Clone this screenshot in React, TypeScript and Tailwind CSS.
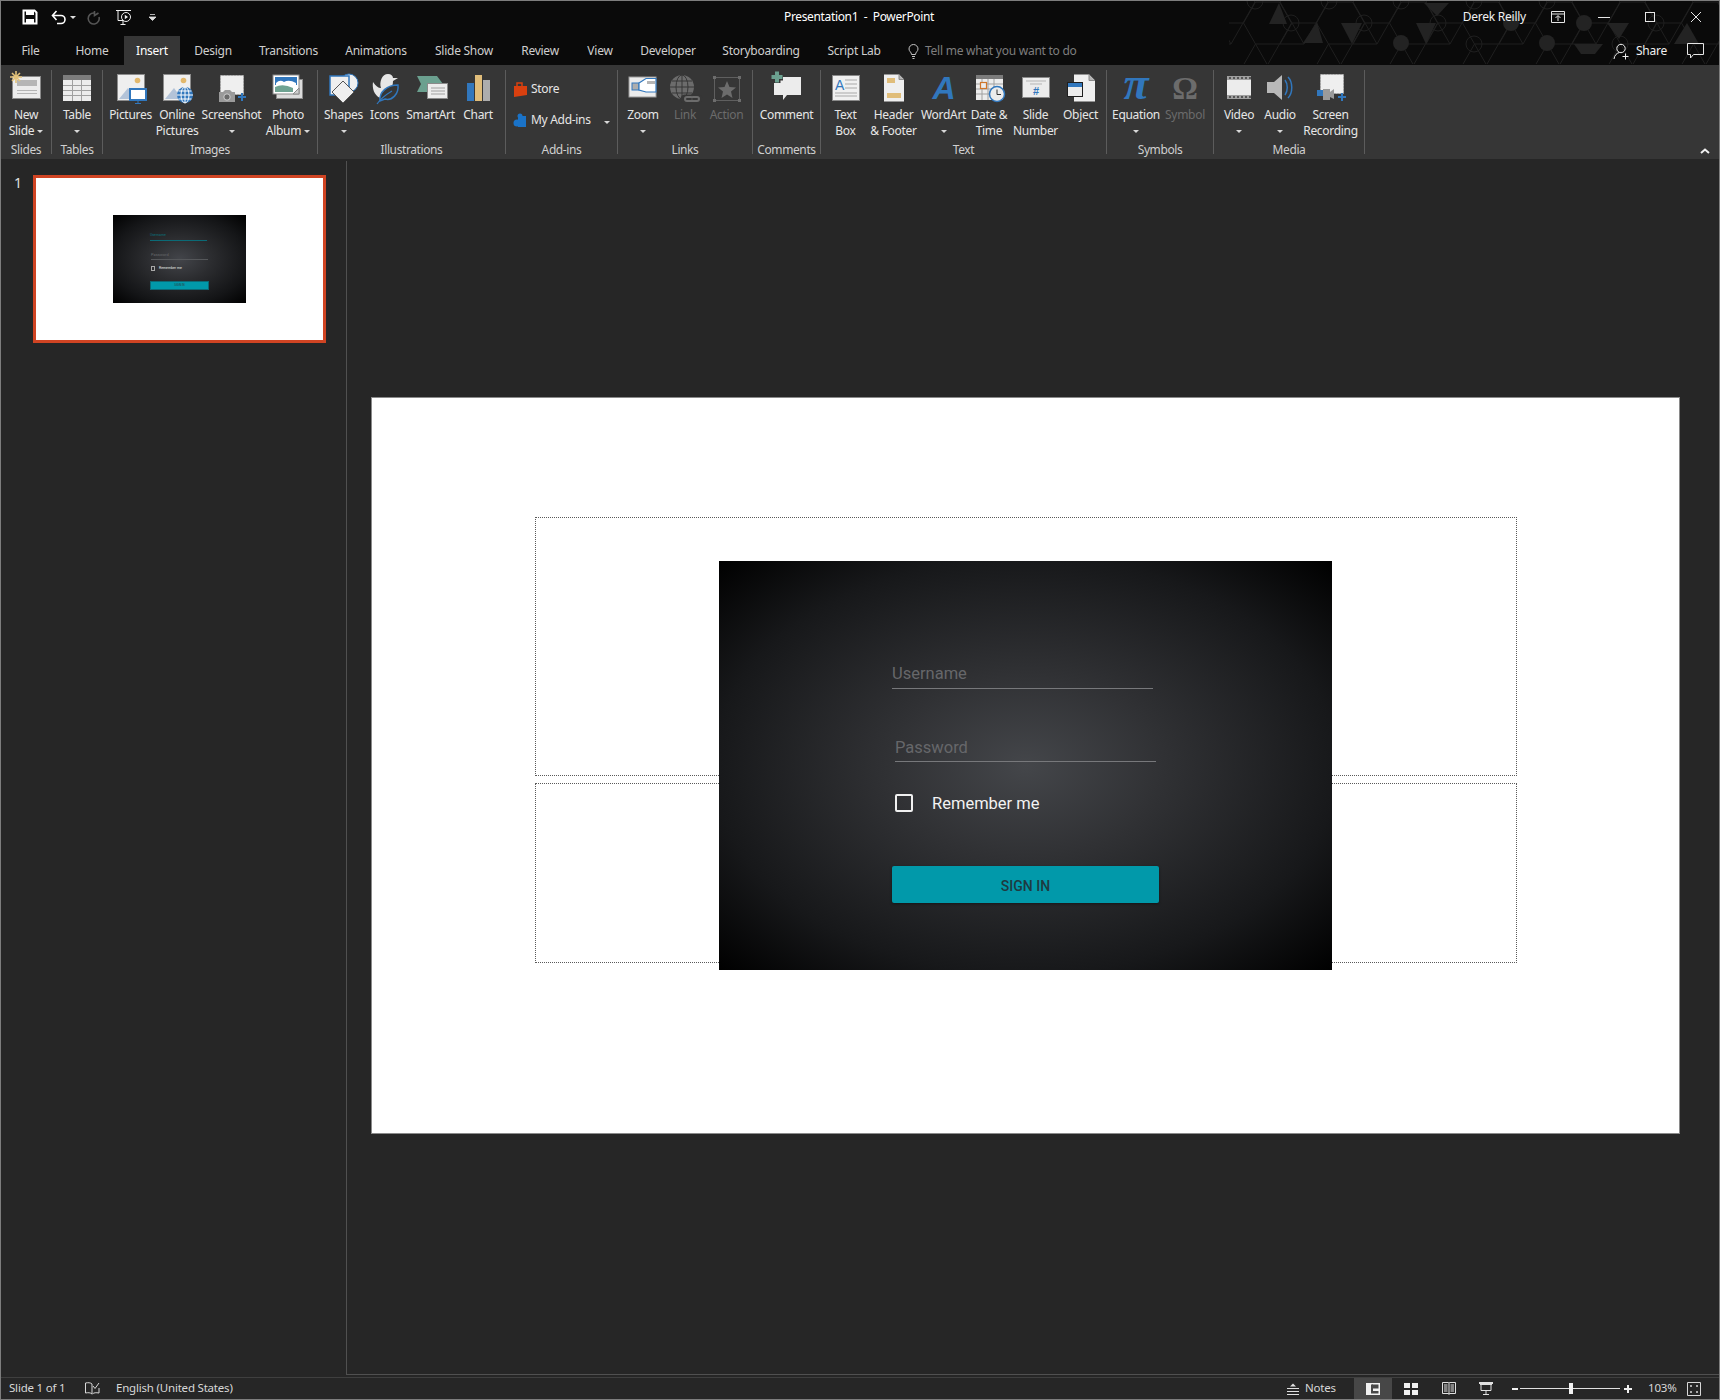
import React from 'react';

const FONT = "'Noto Sans', 'Open Sans', sans-serif";

const Svg = ({ children }: { children: React.ReactNode }) => (
  <svg width="44" height="36" viewBox="0 0 44 36" className="shrink-0 block overflow-visible">
    {children}
  </svg>
);

const Caret = () => (
  <span className="inline-block w-0 h-0 border-x-[3px] border-t-[3px] border-x-transparent border-t-[#d8d8d8]" />
);

interface ItemProps {
  w: string;
  lines: string[];
  caret?: 'inline' | 'line';
  off?: boolean;
  children: React.ReactNode;
}

const Item = ({ w, lines, caret, off, children }: ItemProps) => (
  <div className={`${w} shrink-0 flex flex-col items-center`}>
    <Svg>{children}</Svg>
    <div className={`mt-[3px] flex flex-col items-center whitespace-nowrap leading-[16px] ${off ? 'text-[#6b6b6b]' : 'text-[#e6e6e6]'}`}>
      {lines.map((l, i) => (
        <span key={l} className="flex items-center gap-[3px]">
          {l}
          {caret === 'inline' && i === lines.length - 1 && <Caret />}
        </span>
      ))}
      {caret === 'line' && (
        <span className="h-[16px] flex items-center">
          <Caret />
        </span>
      )}
    </div>
  </div>
);

const Group = ({ w, pad, label, children }: { w: string; pad?: string; label: string; children: React.ReactNode }) => (
  <>
    <div className={`${w} shrink-0 flex flex-col`}>
      <div className={`h-[77px] pt-[3px] flex ${pad ?? ''}`}>{children}</div>
      <div className="h-[16px] leading-[16px] text-center text-[#cfcfcf] whitespace-nowrap tracking-[-0.4px]">{label}</div>
    </div>
    <div className="w-px shrink-0 my-[5px] bg-[#5c5c5c]" />
  </>
);

const Pic = () => (
  <>
    <rect x="8.5" y="6.5" width="27" height="26" fill="#efefef" stroke="#8c8c8c" />
    <circle cx="28.5" cy="12.5" r="2.8" fill="#e2b86c" />
    <path d="M10 31 L19 20 L27 31 Z" fill="#b3c3d8" />
  </>
);

const HexPattern = () => {
  const cells: React.ReactNode[] = [];
  for (let c = 0; c < 15; c++) {
    const x = c * 36.5;
    const y = c % 2 === 0 ? 0 : 21;
    cells.push(
      <path key={c} d={`M${x - 12} ${y + 1} L${x} ${y - 20} L${x + 24} ${y - 20} L${x + 36} ${y + 1} L${x + 24} ${y + 22} L${x} ${y + 22} Z M${x} ${y + 22} L${x + 12} ${y + 43} M${x + 24} ${y + 22} L${x + 12} ${y + 43} L${x - 12} ${y + 43} L${x} ${y + 22}`} />
    );
  }
  return (
    <svg width="490" height="63" viewBox="10 0 490 63" className="absolute right-0 top-0">
      <g fill="none" stroke="#1f1f1f" strokeWidth="1">
        {cells}
        {[[72, 22], [145, 22], [219, 22], [255, 43], [255, 0], [328, 0], [36, 0], [401, 43], [437, 22], [182, 0], [110, 0]].map(([cx, cy]) => (
          <circle key={`${cx}-${cy}`} cx={cx} cy={cy} r="8" />
        ))}
      </g>
      <g fill="#232323">
        <path d="M60 2 L50 23 L68 23 Z" />
        <path d="M98 21 L84 42 L104 42 Z" />
        <path d="M122 22 L143 22 L133 43 Z" />
        <path d="M205 2 L230 2 L218 15 Z" />
        <path d="M197 22 L217 22 L207 43 Z" />
        <path d="M355 43 L384 43 L376 53 L362 53 Z" />
        <path d="M388 22 L410 22 L400 38 Z" />
        <path d="M455 43 L480 43 L468 22 Z" />
        <circle cx="182" cy="42" r="8" />
        <circle cx="328" cy="42" r="8" />
        <circle cx="365" cy="22" r="8" />
        <circle cx="292" cy="22" r="8" />
      </g>
    </svg>
  );
};

const tabs = [
  { t: 'File', w: 'w-[59px]' },
  { t: 'Home', w: 'w-[64px]' },
  { t: 'Insert', w: 'w-[56px]' },
  { t: 'Design', w: 'w-[66px]' },
  { t: 'Transitions', w: 'w-[85px]' },
  { t: 'Animations', w: 'w-[90px]' },
  { t: 'Slide Show', w: 'w-[86px]' },
  { t: 'Review', w: 'w-[66px]' },
  { t: 'View', w: 'w-[54px]' },
  { t: 'Developer', w: 'w-[82px]' },
  { t: 'Storyboarding', w: 'w-[104px]' },
  { t: 'Script Lab', w: 'w-[82px]' },
];

const TitleBar = () => (
  <div className="h-[35px] pb-[4px] flex items-center text-[#f0f0f0] tracking-[-0.25px]">
    <div className="w-[783px] shrink-0 h-full relative pt-[2px]">
      <div className="flex items-center h-full pl-[21px] gap-[6px]">
        <svg width="16" height="16" viewBox="0 0 16 16" className="-mt-[1px]">
          <path d="M1.5 1.5 H12.5 L14.5 3.5 V14.5 H1.5 Z" fill="none" stroke="#fff" strokeWidth="2" />
          <rect x="4" y="2" width="8" height="4" fill="#fff" />
          <rect x="4" y="10" width="8" height="4" fill="#fff" />
        </svg>
        <svg width="16" height="15" viewBox="0 0 16 15" className="ml-[7px]">
          <path d="M2 5.5 H10 A4 4 0 0 1 10 13.5 H6 M5.5 1 L1.5 5.5 L5.5 10" fill="none" stroke="#fff" strokeWidth="1.6" />
        </svg>
        <span className="-ml-[3px] w-0 h-0 border-x-[3px] border-t-[3px] border-x-transparent border-t-[#ddd]" />
        <svg width="14" height="14" viewBox="0 0 14 14" className="ml-[5px]">
          <path d="M7 2 A5.5 5.5 0 1 0 12 6 M7.5 0 V4.5 L11.5 2" fill="none" stroke="#555" strokeWidth="1.6" />
        </svg>
        <svg width="18" height="17" viewBox="0 0 18 17" className="ml-[8px]">
          <path d="M1 1.5 H16 M3 1.5 V11.5 H8 M8 11.5 V15 M5.5 15.5 H10.5" fill="none" stroke="#f0f0f0" />
          <circle cx="11" cy="8" r="4.5" fill="none" stroke="#f0f0f0" />
          <path d="M9.8 5.8 L13 8 L9.8 10.2 Z" fill="#f0f0f0" />
        </svg>
        <svg width="7" height="7" viewBox="0 0 7 7" className="ml-[10px]">
          <path d="M1 0.5 H6 M0 3 H7 L3.5 6.5 Z" fill="#ddd" stroke="#ddd" strokeWidth="0.8" />
        </svg>
      </div>
    </div>
    <span className="whitespace-nowrap text-[12px] tracking-[-0.35px] text-white">Presentation1&nbsp; -&nbsp; PowerPoint</span>
    <div className="relative ml-auto flex items-center h-full pr-[17px]">
      <span className="text-[12px] mr-[25px] whitespace-nowrap">Derek Reilly</span>
      <svg width="14" height="12" viewBox="0 0 14 12" className="mr-[33px]">
        <path d="M0.5 0.5 H13.5 V11.5 H0.5 Z M0.5 3 H13.5 M7 10 V5 M4.5 7 L7 4.5 L9.5 7" fill="none" stroke="#e6e6e6" />
      </svg>
      <svg width="12" height="12" viewBox="0 0 12 12" className="mr-[34px]">
        <path d="M0 6.5 H12" stroke="#e6e6e6" />
      </svg>
      <svg width="12" height="12" viewBox="0 0 12 12" className="mr-[34px]">
        <rect x="1.5" y="1.5" width="9" height="9" fill="none" stroke="#e6e6e6" />
      </svg>
      <svg width="12" height="12" viewBox="0 0 12 12">
        <path d="M1 1 L11 11 M11 1 L1 11" stroke="#e6e6e6" />
      </svg>
    </div>
  </div>
);

const TabRow = () => (
  <div className="h-[29px] flex items-stretch text-[#cfcfcf] relative tracking-[-0.25px]">
    {tabs.map((tab) => (
      <div
        key={tab.t}
        className={`${tab.w} shrink-0 pt-[1px] flex items-center justify-center whitespace-nowrap ${tab.t === 'Insert' ? 'bg-[#363636] text-white' : ''}`}
      >
        {tab.t}
      </div>
    ))}
    <div className="ml-[13px] pt-[1px] flex items-center gap-[6px] text-[#7e7e7e]">
      <svg width="11" height="15" viewBox="0 0 11 15">
        <path d="M3.5 10.5 C3.5 8 1 7.5 1 5 A4.5 4.5 0 0 1 10 5 C10 7.5 7.5 8 7.5 10.5 Z M4 12.5 H7 M4.5 14.5 H6.5" fill="none" stroke="#c4c4c4" />
      </svg>
      <span className="whitespace-nowrap">Tell me what you want to do</span>
    </div>
    <div className="ml-auto relative pt-[1px] flex items-center pr-[15px] text-[#f0f0f0]">
      <svg width="17" height="17" viewBox="0 0 17 17" className="mr-[6px]">
        <circle cx="8" cy="5.5" r="4.2" fill="none" stroke="#f0f0f0" />
        <path d="M1 16 C1.5 12 4 10 6.5 9.5 M9 10 H9 M12.5 10.5 V16.5 M9.5 13.5 H15.5" fill="none" stroke="#f0f0f0" />
      </svg>
      <span className="mr-[20px] whitespace-nowrap">Share</span>
      <svg width="17" height="16" viewBox="0 0 17 16">
        <path d="M0.5 0.5 H16.5 V11.5 H6.5 L3.5 15 V11.5 H0.5 Z" fill="none" stroke="#e6e6e6" />
      </svg>
    </div>
  </div>
);

const Ribbon = () => (
  <div className="h-[94px] bg-[#363636] flex relative text-[12px] tracking-[-0.3px]">
    <Group w="w-[50px]" label="Slides">
      <Item w="w-[50px]" lines={['New', 'Slide']} caret="inline">
        <rect x="8.5" y="8.5" width="28" height="22" fill="#ececec" stroke="#8a8a8a" />
        <rect x="13" y="12" width="20" height="6" fill="#b5b5b5" />
        <path d="M13 22.5 H33 M13 25.5 H33" stroke="#b5b5b5" />
        <path d="M12 3 V15 M6 9 H18 M8 5 L16 13 M16 5 L8 13" stroke="#e2c27a" strokeWidth="1.6" />
      </Item>
    </Group>
    <Group w="w-[50px]" label="Tables">
      <Item w="w-[50px]" lines={['Table']} caret="line">
        <rect x="8" y="7" width="28" height="26" fill="#ececec" />
        <rect x="8" y="7" width="28" height="5" fill="#7c7c7c" />
        <path d="M17.5 12 V33 M26.5 12 V33 M8 17.5 H36 M8 22.5 H36 M8 27.5 H36" stroke="#a0a0a0" />
      </Item>
    </Group>
    <Group w="w-[214px]" pad="pl-[5px]" label="Images">
      <Item w="w-[45px]" lines={['Pictures']}>
        <Pic />
        <rect x="21" y="21" width="16" height="11" fill="#fff" stroke="#3177bd" strokeWidth="2" />
        <path d="M29 32 V35 M26 35.5 H32" stroke="#3177bd" />
      </Item>
      <Item w="w-[48px]" lines={['Online', 'Pictures']}>
        <Pic />
        <circle cx="30" cy="27" r="8" fill="#3177bd" />
        <path d="M30 19 V35 M22 27 H38 M23.5 23 H36.5 M23.5 31 H36.5" stroke="#fff" />
        <ellipse cx="30" cy="27" rx="4" ry="8" fill="none" stroke="#fff" />
      </Item>
      <Item w="w-[61px]" lines={['Screenshot']} caret="line">
        <rect x="10.5" y="7.5" width="23" height="19" fill="#efefef" stroke="#b5b5b5" strokeDasharray="2 1" />
        <path d="M9 24 H13 L15 22 H20 L22 24 H25 V34 H9 Z" fill="#9a9a9a" />
        <circle cx="17" cy="29" r="3.2" fill="#6b6b6b" stroke="#cfcfcf" />
        <path d="M32 25 V33 M28 29 H36" stroke="#3177bd" strokeWidth="2" />
      </Item>
      <Item w="w-[52px]" lines={['Photo', 'Album']} caret="inline">
        <rect x="10.5" y="11.5" width="26" height="19" fill="#dcdcdc" stroke="#8a8a8a" />
        <rect x="7" y="7" width="26" height="19" fill="#fff" stroke="#8a8a8a" />
        <rect x="9" y="9" width="22" height="8" fill="#3177bd" />
        <path d="M10 15 Q14 11 18 14 Q23 11 30 15 V17 H10 Z" fill="#fff" />
        <path d="M9 24 V19 Q17 15 27 20 V24 Z" fill="#6fa392" />
        <path d="M27 26 L33 20 V26 Z" fill="#cfcfcf" stroke="#8a8a8a" />
      </Item>
    </Group>
    <Group w="w-[187px]" pad="pl-[5px]" label="Illustrations">
      <Item w="w-[41px]" lines={['Shapes']} caret="line">
        <circle cx="27" cy="15" r="9" fill="#efefef" stroke="#3177bd" />
        <rect x="8" y="8" width="19" height="19" fill="#efefef" stroke="#3177bd" strokeWidth="1.5" />
        <path d="M21 13 L32 24 L21 35 L10 24 Z" fill="#efefef" stroke="#555" />
      </Item>
      <Item w="w-[41px]" lines={['Icons']}>
        <path d="M10 14 C13 18 15 20 18 20 C16 14 19 6 25 6 C28 6 30 8 30 10 L35 10 L30 13 C30 17 29 20 26 23 L17 30 C11 27 9 20 10 14 Z" fill="#e6e6e6" />
        <path d="M17 33 C16 24 24 17 35 17 C36 26 29 33 22 31 Z" fill="#363636" stroke="#3177bd" strokeWidth="1.5" />
        <path d="M14 36 C18 30 24 26 29 23" fill="none" stroke="#3177bd" strokeWidth="1.2" />
      </Item>
      <Item w="w-[51px]" lines={['SmartArt']}>
        <path d="M8 8 H28 L34 16 V24 H8 L12 16 Z" fill="#6ba08f" />
        <rect x="18.5" y="15.5" width="20" height="15" fill="#ececec" stroke="#8a8a8a" />
        <path d="M22 20 H36 M22 23 H36 M22 26 H36" stroke="#a0a0a0" />
      </Item>
      <Item w="w-[44px]" lines={['Chart']}>
        <rect x="11" y="15" width="7" height="18" fill="#3177bd" />
        <rect x="19" y="7" width="7" height="26" fill="#e0bd7a" />
        <rect x="27" y="12" width="7" height="21" fill="#adadad" />
      </Item>
    </Group>
    <Group w="w-[111px]" label="Add-ins">
      <div className="flex flex-col pl-[7px] text-[#e6e6e6]">
        <div className="h-[29px] mt-[6px] flex items-center gap-[4px]">
          <svg width="14" height="16" viewBox="0 0 14 16">
            <path d="M1 5 H14 V14 L1 16 Z" fill="#d9400f" />
            <path d="M4 5 V2 H9 V5" fill="none" stroke="#d9400f" strokeWidth="1.5" />
          </svg>
          <span>Store</span>
        </div>
        <div className="h-[33px] flex items-center gap-[4px] whitespace-nowrap">
          <svg width="14" height="14" viewBox="0 0 14 14">
            <circle cx="4" cy="10" r="3.5" fill="#1a73c8" />
            <rect x="5" y="3" width="8" height="11" fill="#1a73c8" />
            <circle cx="7" cy="3" r="2.5" fill="#1a73c8" />
          </svg>
          <span>My Add-ins</span>
          <span className="ml-[9px]"><Caret /></span>
        </div>
      </div>
    </Group>
    <Group w="w-[134px]" pad="pl-[4px]" label="Links">
      <Item w="w-[42px]" lines={['Zoom']} caret="line">
        <rect x="8" y="9" width="27" height="20" fill="#ececec" stroke="#9a9a9a" />
        <rect x="11" y="15" width="7" height="7" fill="#adadad" stroke="#3177bd" />
        <path d="M18 15 L25 10.5 H35 V24 H25 L18 22 Z" fill="#fff" stroke="#3177bd" strokeWidth="1.2" />
        <rect x="26" y="13" width="8" height="3" fill="#b5b5b5" />
      </Item>
      <Item w="w-[42px]" lines={['Link']} off>
        <circle cx="19" cy="19" r="12" fill="#6c6c6c" />
        <path d="M19 7 V31 M7 19 H31 M9 13 H29 M9 25 H29" stroke="#363636" />
        <ellipse cx="19" cy="19" rx="6" ry="12" fill="none" stroke="#363636" />
        <path d="M22 31 H35" stroke="#363636" strokeWidth="9" strokeLinecap="round" />
        <path d="M24 31 H28 M30 31 H34" stroke="#6c6c6c" strokeWidth="6" strokeLinecap="round" />
        <path d="M24 31 H28 M30 31 H34" stroke="#363636" strokeWidth="2" strokeLinecap="round" />
      </Item>
      <Item w="w-[41px]" lines={['Action']} off>
        <rect x="9.5" y="9.5" width="25" height="23" fill="none" stroke="#5f5f5f" />
        <path d="M8 8 h3 v3 h-3 Z M33 8 h3 v3 h-3 Z M8 31 h3 v3 h-3 Z M33 31 h3 v3 h-3 Z" fill="#6c6c6c" />
        <path d="M22 13 L24.5 19 L31 19.5 L26 23.5 L27.5 30 L22 26.5 L16.5 30 L18 23.5 L13 19.5 L19.5 19 Z" fill="#6c6c6c" />
      </Item>
    </Group>
    <Group w="w-[67px]" label="Comments">
      <Item w="w-[67px]" lines={['Comment']}>
        <path d="M9 9 H36 V27 H22 L18 32 V27 H9 Z" fill="#ececec" />
        <path d="M12 3 V15 M6 9 H18" stroke="#363636" strokeWidth="7" />
        <path d="M12 3.5 V14.5 M6.5 9 H17.5" stroke="#6ba08f" strokeWidth="4" />
      </Item>
    </Group>
    <Group w="w-[285px]" pad="pl-[4px]" label="Text">
      <Item w="w-[41px]" lines={['Text', 'Box']}>
        <rect x="8.5" y="7.5" width="27" height="25" fill="#f0f0f0" stroke="#8a8a8a" />
        <text x="11" y="22" fontSize="14" fill="#3177bd" fontFamily="'Liberation Sans', sans-serif">A</text>
        <path d="M21 12 H33 M21 16 H33 M21 20 H33 M11 25 H33 M11 28 H33" stroke="#a8a8a8" />
      </Item>
      <Item w="w-[55px]" lines={['Header', '& Footer']}>
        <path d="M12 6.5 H27 L32 11.5 V33.5 H12 Z" fill="#efefef" />
        <path d="M27 6.5 V11.5 H32" fill="#b5b5b5" stroke="#8a8a8a" />
        <rect x="15" y="10" width="8" height="5" fill="#e0bd7a" />
        <rect x="15" y="25" width="14" height="5" fill="#e0bd7a" />
      </Item>
      <Item w="w-[45px]" lines={['WordArt']} caret="line">
        <text x="22" y="31" textAnchor="middle" fontSize="32" fontStyle="italic" fontWeight="bold" fill="#3177bd" fontFamily="'Liberation Sans', sans-serif">A</text>
      </Item>
      <Item w="w-[46px]" lines={['Date &', 'Time']}>
        <rect x="9" y="8" width="27" height="24" fill="#ececec" />
        <rect x="9" y="7" width="27" height="4" fill="#7c7c7c" />
        <path d="M15 11 V32 M21 11 V32 M27 11 V32 M9 16 H36 M9 21 H36 M9 26 H36" stroke="#a0a0a0" />
        <rect x="13.5" y="14.5" width="6" height="6" fill="#ececec" stroke="#d0762a" strokeWidth="1.2" />
        <circle cx="30" cy="26" r="7.5" fill="#ececec" stroke="#3177bd" strokeWidth="1.5" />
        <path d="M30 21.5 V26.5 H34" fill="none" stroke="#333" />
      </Item>
      <Item w="w-[47px]" lines={['Slide', 'Number']}>
        <rect x="8.5" y="9.5" width="27" height="20" fill="#ececec" stroke="#8a8a8a" />
        <path d="M12 13 H32 M16 16 H28" stroke="#b5b5b5" />
        <text x="22" y="27" textAnchor="middle" fontSize="11" fontWeight="bold" fill="#3177bd" fontFamily="'Liberation Sans', sans-serif">#</text>
      </Item>
      <Item w="w-[43px]" lines={['Object']}>
        <path d="M15 6.5 H30 L36 12.5 V33.5 H15 Z" fill="#efefef" />
        <path d="M30 6.5 V12.5 H36" fill="#b5b5b5" stroke="#8a8a8a" />
        <rect x="8.5" y="14.5" width="15" height="14" fill="#ececec" stroke="#1f1f1f" />
        <rect x="9" y="15" width="14" height="4" fill="#3177bd" />
      </Item>
    </Group>
    <Group w="w-[106px]" pad="pl-[4px]" label="Symbols">
      <Item w="w-[50px]" lines={['Equation']} caret="line">
        <text x="22" y="31" textAnchor="middle" fontSize="46" fontStyle="italic" fontWeight="bold" fill="#3177bd" fontFamily="'Liberation Serif', serif">π</text>
      </Item>
      <Item w="w-[48px]" lines={['Symbol']} off>
        <text x="22" y="31" textAnchor="middle" fontSize="32" fontWeight="bold" fill="#6c6c6c" fontFamily="'Liberation Serif', serif">Ω</text>
      </Item>
    </Group>
    <Group w="w-[150px]" pad="pl-[5px]" label="Media">
      <Item w="w-[40px]" lines={['Video']} caret="line">
        <rect x="10" y="8" width="24" height="23" fill="#ececec" />
        <path d="M10 10 H34 M10 29 H34" stroke="#555" strokeWidth="3" />
        <path d="M10 10 H34 M10 29 H34" stroke="#ececec" strokeWidth="1" strokeDasharray="2 2" />
      </Item>
      <Item w="w-[42px]" lines={['Audio']} caret="line">
        <path d="M9 14 H16 L24 7 V32 L16 25 H9 Z" fill="#b8b8b8" />
        <path d="M27 12 C30 16 30 23 27 27 M30 9 C35 14 35 25 30 30" fill="none" stroke="#3177bd" strokeWidth="1.5" />
      </Item>
      <Item w="w-[59px]" lines={['Screen', 'Recording']}>
        <rect x="11.5" y="6.5" width="23" height="19" fill="#efefef" stroke="#b5b5b5" strokeDasharray="2 1" />
        <rect x="8" y="22" width="9" height="6" fill="#3177bd" />
        <rect x="14" y="21" width="7" height="11" fill="#9a9a9a" />
        <path d="M21 24 L25 21 V31 L21 29 Z" fill="#9a9a9a" />
        <path d="M33 25 V33 M29 29 H37" stroke="#3177bd" strokeWidth="2" />
      </Item>
    </Group>
    <svg width="10" height="6" viewBox="0 0 10 6" className="absolute right-[9px] bottom-[5px]">
      <path d="M1 5 L5 1.5 L9 5" fill="none" stroke="#f0f0f0" strokeWidth="2" />
    </svg>
  </div>
);

const Thumbnail = () => (
  <div className="w-[293px] h-[168px] border-[3px] border-[#d04423] bg-white flex items-center justify-center shrink-0">
    <div className="w-[133px] h-[88px] pt-[18px] pl-[37px] bg-[radial-gradient(ellipse_at_center,#43454a_0%,#2b2c2f_35%,#141517_72%,#000_100%)] [font-family:Roboto,sans-serif]">
      <div className="w-[57px] text-[3.5px] leading-[4px] text-[#0a6f7c]">Username</div>
      <div className="w-[57px] h-px mt-[3px] bg-[#0b6a76]" />
      <div className="ml-px mt-[12px] text-[4px] leading-[4px] text-[#66686b]">Password</div>
      <div className="ml-px w-[57px] h-px mt-[2px] bg-[#55575a]" />
      <div className="ml-px mt-[6px] flex items-center gap-[4px]">
        <span className="w-[4px] h-[5px] border border-[#a8a8a8]" />
        <span className="text-[3.5px] leading-[5px] text-[#e8e8e8]">Remember me</span>
      </div>
      <div className="mt-[10px] w-[59px] h-[9px] bg-[#0199aa] border border-[#0b6a76] flex items-center justify-center text-[3px] text-[#2a3a3e]">
        SIGN IN
      </div>
    </div>
  </div>
);

const Placeholder = ({ box }: { box: string }) => (
  <div className={`absolute ${box} border border-dotted border-[#5a5a5a]`} />
);

const Slide = () => (
  <div className="relative w-[1307px] h-[735px] bg-white outline outline-1 outline-[#8a8a8a] shrink-0">
    <Placeholder box="left-[163px] top-[119px] w-[982px] h-[259px]" />
    <Placeholder box="left-[163px] top-[385px] w-[982px] h-[180px]" />
    <div className="absolute left-[347px] top-[163px] w-[613px] h-[409px] pt-[103px] pl-[173px] bg-[radial-gradient(ellipse_at_center,#44464a_0%,#303134_32%,#17181a_72%,#000_100%)] [font-family:Roboto,sans-serif]">
      <div className="w-[261px] pb-[4px] border-b border-[#77787b] text-[16.5px] leading-[20px] text-[#66676a]">Username</div>
      <div className="ml-[3px] mt-[49px] w-[261px] pb-[3px] border-b border-[#77787b] text-[16.5px] leading-[20px] text-[#66676a]">Password</div>
      <div className="ml-[3px] mt-[32px] h-[18px] flex items-center gap-[19px]">
        <span className="w-[18px] h-[18px] rounded-[2px] border-2 border-[#f0f0f0]" />
        <span className="pt-[1px] text-[16.5px] leading-[18px] text-[#f2f2f2]">Remember me</span>
      </div>
      <div className="mt-[54px] w-[267px] h-[37px] pt-[4px] rounded-[2px] bg-[#0199aa] flex items-center justify-center text-[14px] font-medium text-[#1f3a40] shadow-[0_1px_3px_rgba(0,0,0,0.4)]">
        SIGN IN
      </div>
    </div>
  </div>
);

const StatusBar = () => (
  <div className="h-[22px] flex items-center text-[#d8d8d8] text-[11.5px] tracking-[-0.2px] border-t border-[#3f3f3f]">
    <span className="-mt-[1px] ml-[8px] w-[76px] whitespace-nowrap">Slide 1 of 1</span>
    <svg width="15" height="13" viewBox="0 0 15 13">
      <path d="M7 2 C5.5 0.5 3 0.5 0.5 1 V11 C3 10.5 5.5 10.5 7 12 V2 M7.5 12 C9 10.5 11 10.5 14 11 V6 M8 4 L10 6.5 L14 1" fill="none" stroke="#d8d8d8" />
    </svg>
    <span className="-mt-[1px] ml-[16px] whitespace-nowrap">English (United States)</span>
    <div className="ml-auto flex items-center h-full">
      <svg width="12" height="12" viewBox="0 0 12 12" className="mr-[6px]">
        <path d="M6 0.5 L9 3.5 H3 Z" fill="#e0e0e0" />
        <path d="M0 5.5 H12 M0 8.5 H12 M0 11.5 H12" stroke="#e0e0e0" />
      </svg>
      <span className="-mt-[1px] w-[49px] whitespace-nowrap">Notes</span>
      <div className="w-[38px] h-full bg-[#474747] flex items-center justify-center">
        <svg width="14" height="12" viewBox="0 0 14 12">
          <path d="M0 0 H14 V12 H0 Z M5 1.5 V10.5 H12.5 V8 H7 V1.5 Z" fill="#f0f0f0" fillRule="evenodd" />
          <rect x="6" y="1.5" width="6.5" height="4" fill="#474747" />
        </svg>
      </div>
      <div className="w-[38px] flex justify-center">
        <svg width="14" height="12" viewBox="0 0 14 12">
          <path d="M0 0 H6 V5 H0 Z M8 0 H14 V5 H8 Z M0 7 H6 V12 H0 Z M8 7 H14 V12 H8 Z" fill="#f0f0f0" />
        </svg>
      </div>
      <div className="w-[37px] flex justify-center">
        <svg width="14" height="13" viewBox="0 0 14 13">
          <path d="M0.5 0.5 H6.5 L7 1 L7.5 0.5 H13.5 V11.5 H7.5 L7 12.5 L6.5 11.5 H0.5 Z M7 1 V12 M2 3 H5.5 M2 5 H5.5 M2 7 H5.5 M2 9 H5.5 M8.5 3 H12 M8.5 5 H12 M8.5 7 H12 M8.5 9 H12" fill="none" stroke="#e0e0e0" />
        </svg>
      </div>
      <div className="w-[38px] flex justify-center">
        <svg width="14" height="13" viewBox="0 0 14 13">
          <path d="M0 0.5 H14 M1 2.5 H13 M2 2.5 V8.5 H12 V2.5 M7 8.5 V12 M4 12.5 H10" fill="none" stroke="#e0e0e0" />
          <rect x="0" y="0" width="14" height="2" fill="#e0e0e0" />
        </svg>
      </div>
      <span className="ml-[7px] w-[6px] h-[2px] bg-[#f0f0f0]" />
      <div className="relative ml-[2px] w-[100px] h-px bg-[#e0e0e0]">
        <span className="absolute left-[49px] -top-[5px] w-[4px] h-[11px] bg-[#f0f0f0]" />
      </div>
      <svg width="8" height="8" viewBox="0 0 8 8" className="ml-[4px]">
        <path d="M4 0 V8 M0 4 H8" stroke="#f0f0f0" strokeWidth="2" />
      </svg>
      <span className="-mt-[1px] ml-[16px] w-[33px] whitespace-nowrap">103%</span>
      <svg width="14" height="14" viewBox="0 0 14 14" className="ml-[6px] mr-[18px]">
        <path d="M0.5 0.5 H13.5 V13.5 H0.5 Z M3 4 H5 M4 3 V5 M9 4 H11 M10 3 V5 M3 10 H5 M4 9 V11 M9 10 H11 M10 9 V11" fill="none" stroke="#d8d8d8" />
      </svg>
    </div>
  </div>
);

export default function App() {
  return (
    <div className="w-[1720px] h-[1400px] flex flex-col bg-[#262626] border border-[#7d7d7d] text-[12px] overflow-hidden" style={{ fontFamily: FONT }}>
      <div className="relative bg-[#0a0a0a]">
        <HexPattern />
        <TitleBar />
        <TabRow />
      </div>
      <Ribbon />
      <div className="flex-1 flex min-h-0">
        <div className="w-[346px] shrink-0 flex pt-[14px] pl-[13px] gap-[13px] border-r border-[#505050] mt-[2px] mb-[2px]">
          <span className="text-[#e0e0e0] text-[14px] leading-[14px] mt-[1px] w-[6px]">1</span>
          <Thumbnail />
        </div>
        <div className="flex-1 flex flex-col mt-[2px] mb-[2px]">
          <div className="flex-1 pl-[25px] pt-[237px]">
            <Slide />
          </div>
          <div className="h-px bg-[#505050]" />
        </div>
      </div>
      <StatusBar />
    </div>
  );
}
